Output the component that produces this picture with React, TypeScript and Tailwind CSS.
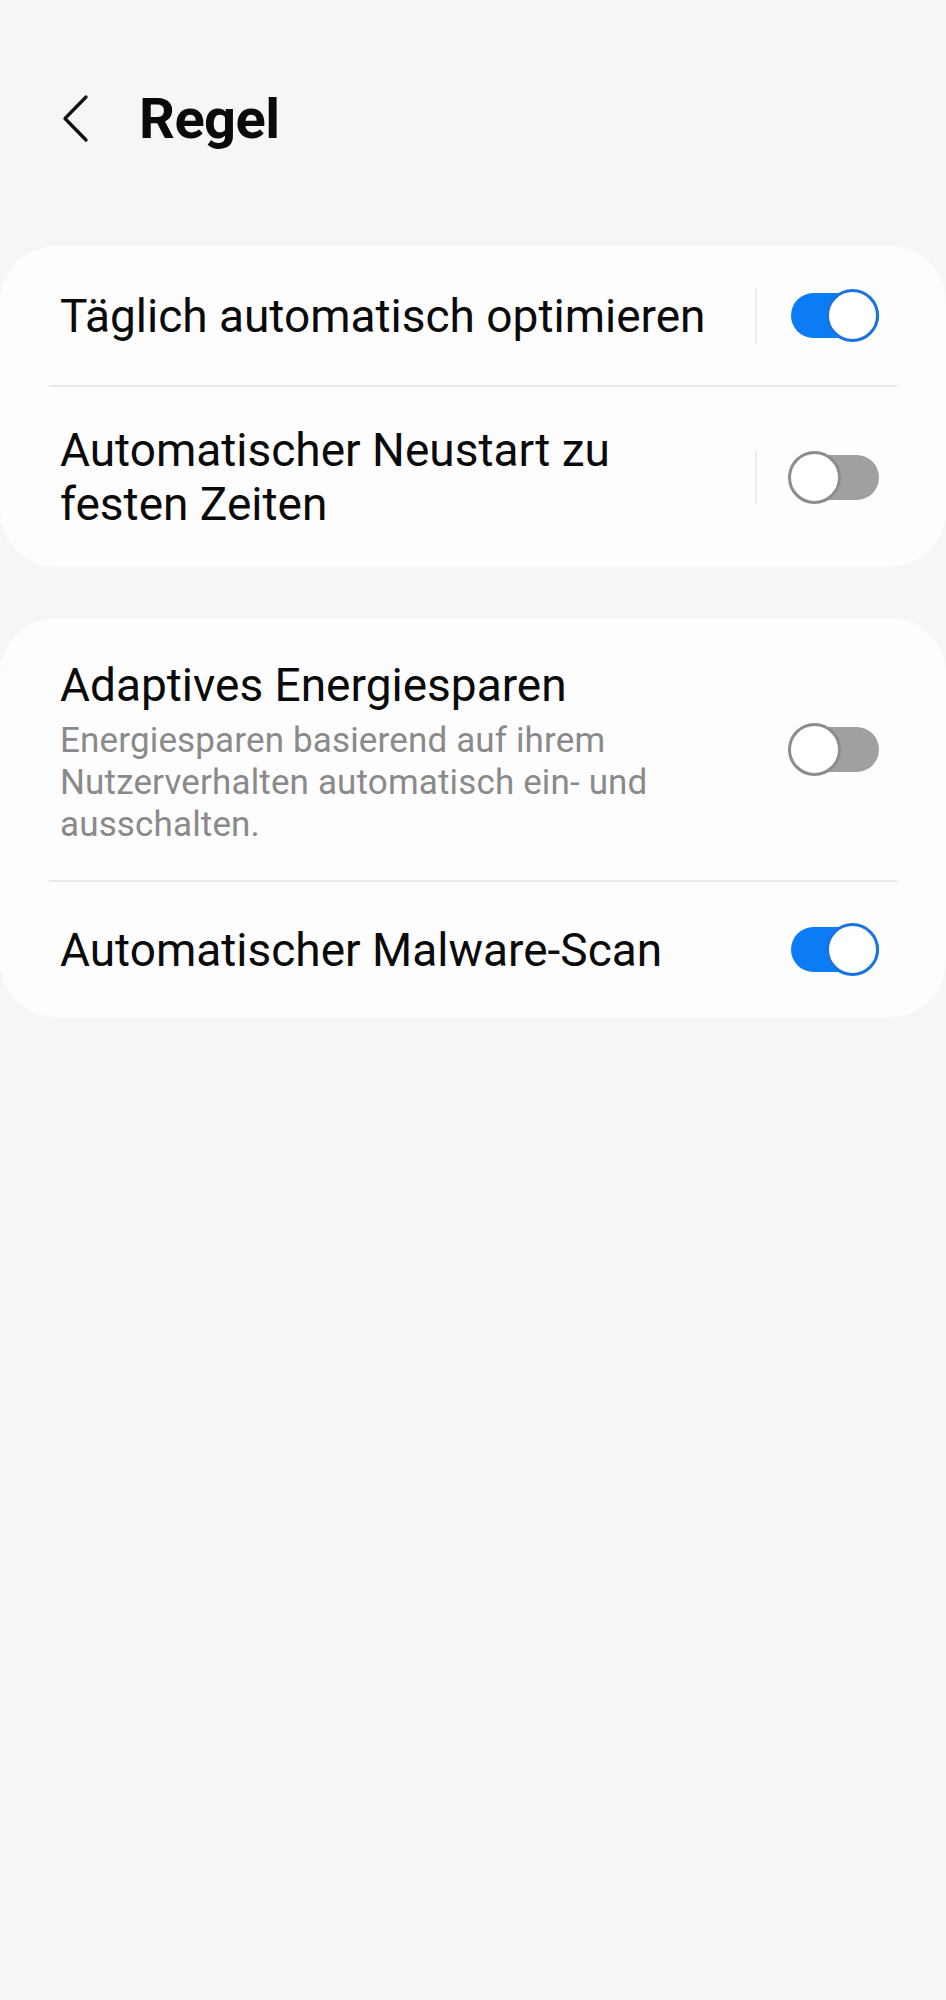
type Row = {
  title: string;
  sub?: string;
  on: boolean;
  divider?: boolean;
};

function Toggle({ on }: { on: boolean }) {
  return (
    <div className="relative h-[53px] w-[91px] shrink-0">
      <div
        className={
          on
            ? "absolute left-[3px] right-0 top-[4px] bottom-[4px] rounded-full bg-[#0b7cf4]"
            : "absolute left-[3px] right-0 top-[4px] bottom-[4px] rounded-full bg-[#a0a0a0]"
        }
      />
      <div
        className={
          on
            ? "absolute right-0 top-0 h-[53px] w-[53px] rounded-full border-[3px] border-[#1a74e0] bg-white"
            : "absolute left-0 top-0 h-[53px] w-[53px] rounded-full border-[3px] border-[#8c8c8c] bg-white"
        }
      />
    </div>
  );
}

function SettingRow({ row, className }: { row: Row; className: string }) {
  return (
    <div className={"flex items-center pl-[60px] pr-[67px] " + className}>
      <div className={row.sub ? "min-w-0 flex-1 pr-[36px] pt-[6px]" : "min-w-0 flex-1 pr-[36px]"}>
        <div className="text-[46px] leading-[54px] text-[#0a0a0a]">{row.title}</div>
        {row.sub && (
          <div className="mt-[8px] text-[35px] leading-[42px] tracking-[0.15px] text-[#8a8a8a]">{row.sub}</div>
        )}
      </div>
      {row.divider ? (
        <div className="mr-[31px] h-[54px] w-[2px] bg-[#ececec]" />
      ) : (
        <div className="mr-[33px] w-0" />
      )}
      <Toggle on={row.on} />
    </div>
  );
}

export default function App() {
  return (
    <div
      className="min-h-[2000px] w-full bg-[#f6f6f6]"
      style={{ fontFamily: "Roboto, 'Noto Sans', sans-serif" }}
    >
      <header className="flex h-[246px] items-start pt-[88px]">
        <svg
          className="ml-[60px] mt-[6px] shrink-0"
          width="30"
          height="50"
          viewBox="0 0 30 50"
          fill="none"
          stroke="#111"
          strokeWidth="3.3"
          strokeLinecap="round"
          strokeLinejoin="round"
        >
          <polyline points="26,3 5,24.5 26,46" />
        </svg>
        <h1 className="ml-[49px] text-[56px] font-bold leading-[62px] tracking-[-0.5px] text-[#0a0a0a]">
          Regel
        </h1>
      </header>

      <section className="rounded-[56px] bg-[#fdfdfd]">
        <SettingRow
          row={{ title: "Täglich automatisch optimieren", on: true, divider: true }}
          className="h-[139px]"
        />
        <div className="mx-[49px] h-[2px] bg-[#e8e8e8]" />
        <SettingRow
          row={{ title: "Automatischer Neustart zu festen Zeiten", on: false, divider: true }}
          className="h-[180px]"
        />
      </section>

      <section className="mt-[51px] rounded-[56px] bg-[#fdfdfd]">
        <SettingRow
          row={{
            title: "Adaptives Energiesparen",
            sub: "Energiesparen basierend auf ihrem Nutzerverhalten automatisch ein- und ausschalten.",
            on: false,
          }}
          className="h-[262px]"
        />
        <div className="mx-[49px] h-[2px] bg-[#e8e8e8]" />
        <SettingRow
          row={{ title: "Automatischer Malware-Scan", on: true }}
          className="h-[135px]"
        />
      </section>
    </div>
  );
}
